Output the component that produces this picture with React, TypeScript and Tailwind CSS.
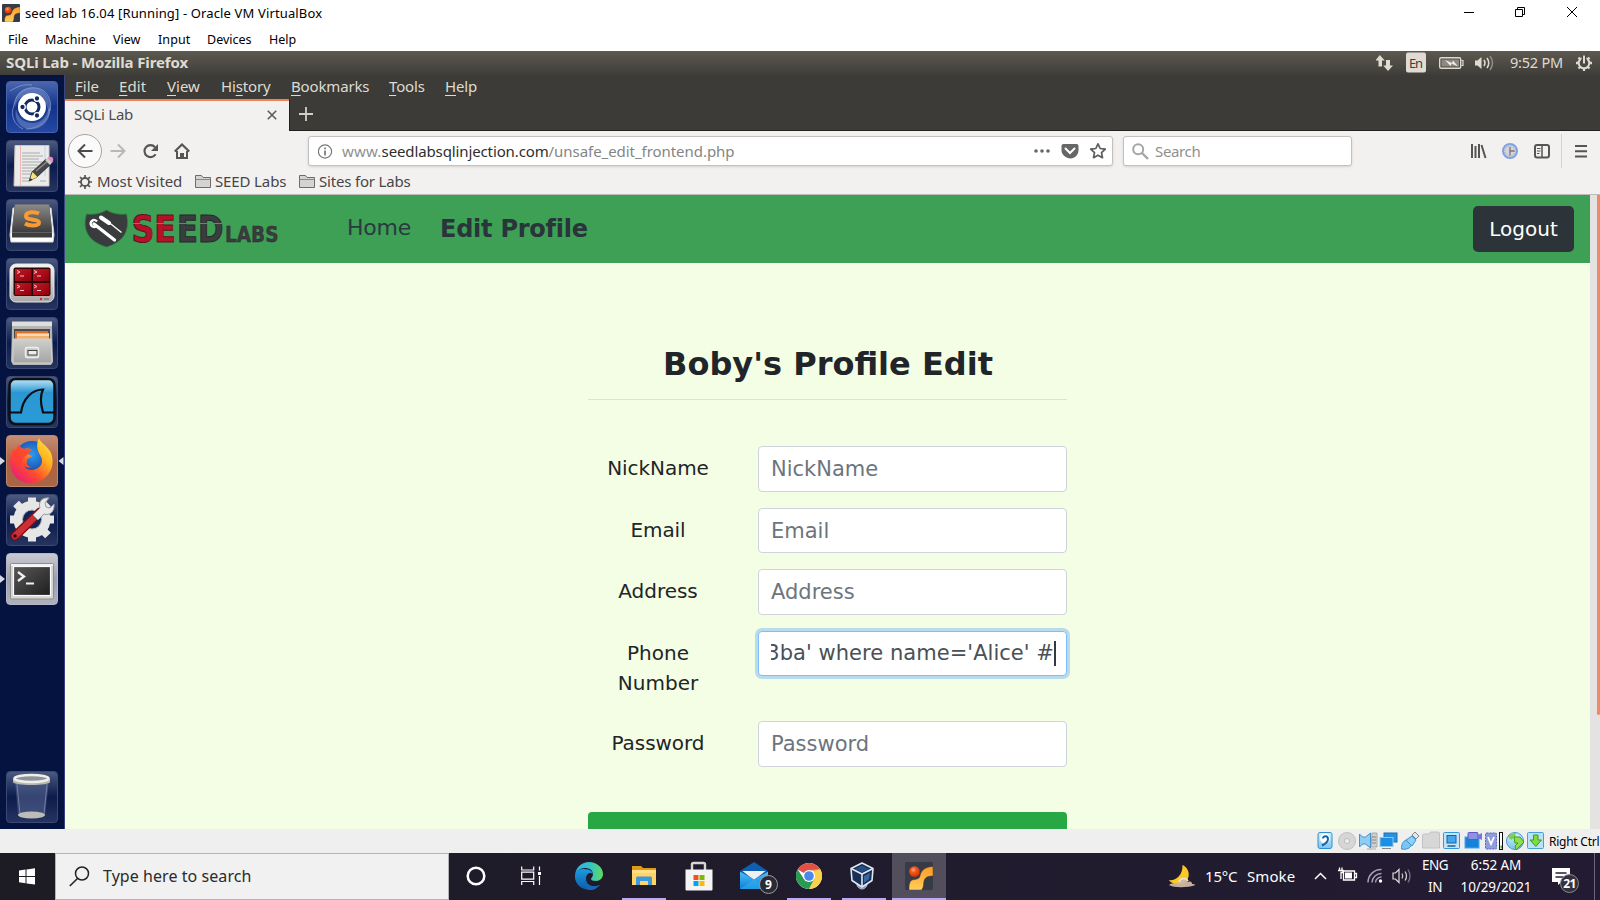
import type { ReactNode } from "react";

type SvgProps = { w: number; h: number; children: ReactNode; className?: string };

function Svg({ w, h, children, className = "" }: SvgProps) {
  return (
    <svg width={w} height={h} viewBox={`0 0 ${w} ${h}`} fill="none" className={`shrink-0 ${className}`}>
      {children}
    </svg>
  );
}

/* ---------- Shared gradients ---------- */

function Defs() {
  return (
    <svg width="0" height="0" className="absolute">
      <defs>
        <linearGradient id="amber" x1="0" y1="0" x2="0" y2="1">
          <stop offset="0" stopColor="#ff9a2a" />
          <stop offset="1" stopColor="#ffd05a" />
        </linearGradient>
        <radialGradient id="ball" cx=".4" cy=".35" r=".6">
          <stop offset="0" stopColor="#ffb08a" />
          <stop offset=".4" stopColor="#f9581e" />
          <stop offset="1" stopColor="#d63a08" />
        </radialGradient>
        <linearGradient id="silver" x1="0" y1="0" x2="0" y2="1">
          <stop offset="0" stopColor="#f4f4f2" />
          <stop offset="1" stopColor="#a9a9a6" />
        </linearGradient>
        <linearGradient id="drawer" x1="0" y1="0" x2="0" y2="1">
          <stop offset="0" stopColor="#cfcfce" />
          <stop offset="1" stopColor="#a4a4a3" />
        </linearGradient>
        <linearGradient id="darkKey" x1="0" y1="0" x2="0" y2="1">
          <stop offset="0" stopColor="#8a8a88" />
          <stop offset="1" stopColor="#3c3c3c" />
        </linearGradient>
        <linearGradient id="redPane" x1="0" y1="0" x2="1" y2="1">
          <stop offset="0" stopColor="#c41828" />
          <stop offset="1" stopColor="#8e000c" />
        </linearGradient>
        <linearGradient id="wire" x1="0" y1="0" x2="0" y2="1">
          <stop offset="0" stopColor="#bfe6f8" />
          <stop offset=".3" stopColor="#2b97d2" />
          <stop offset="1" stopColor="#2a9bd8" />
        </linearGradient>
        <linearGradient id="foxBody" x1="1" y1="0" x2="0.1" y2="1">
          <stop offset="0" stopColor="#fff44f" />
          <stop offset=".35" stopColor="#ffb11f" />
          <stop offset=".65" stopColor="#ff4a2e" />
          <stop offset="1" stopColor="#e31587" />
        </linearGradient>
        <radialGradient id="foxGlobe" cx=".5" cy=".4" r=".6">
          <stop offset="0" stopColor="#2a9bf0" />
          <stop offset="1" stopColor="#1c3fa0" />
        </radialGradient>
        <linearGradient id="term" x1="0" y1="0" x2="1" y2="1">
          <stop offset="0" stopColor="#595959" />
          <stop offset="1" stopColor="#1e1e1e" />
        </linearGradient>
        <linearGradient id="edgeTop" x1="0" y1=".4" x2="1" y2=".4">
          <stop offset="0" stopColor="#2bb3e8" />
          <stop offset=".55" stopColor="#35c3c8" />
          <stop offset="1" stopColor="#5fdc57" />
        </linearGradient>
        <linearGradient id="edgeBody" x1="0" y1="0" x2="0" y2="1">
          <stop offset="0" stopColor="#1b9de2" />
          <stop offset="1" stopColor="#0c59a4" />
        </linearGradient>
        <linearGradient id="sky" x1="0" y1="0" x2="0" y2="1">
          <stop offset="0" stopColor="#4cc0fa" />
          <stop offset="1" stopColor="#0d7fd6" />
        </linearGradient>
        <linearGradient id="pale" x1="0" y1="0" x2="0" y2="1">
          <stop offset="0" stopColor="#d5eefb" />
          <stop offset="1" stopColor="#7cc4ee" />
        </linearGradient>
      </defs>
    </svg>
  );
}

function VmLogo({ size }: { size: number }) {
  return (
    <svg width={size} height={size} viewBox="0 0 28 28" className="shrink-0">
      <rect width="28" height="28" rx="1.5" fill="#363c47" />
      <path d="M28 4.500v9.500c-5 0-8 1-9 5-.8 4 0 6-2.500 9H4c0-4 0-8 3-10 4-1 7-.5 8-4 1-6 6-9.500 13-9.500z" fill="url(#amber)" stroke="#5a3010" strokeWidth=".5" />
      <circle cx="9.500" cy="9.500" r="5.300" fill="url(#ball)" />
    </svg>
  );
}

/* ---------- Host window ---------- */

function TitleBar() {
  return (
    <div className="flex h-[26px] shrink-0 items-center bg-white">
      <div className="flex flex-1 items-center pl-0.5">
        <VmLogo size={18} />
        <span className="ml-[5px] whitespace-nowrap text-[13px] leading-none tracking-[0.14px] text-black">
          seed lab 16.04 [Running] - Oracle VM VirtualBox
        </span>
      </div>
      <Svg w={140} h={26}>
        <path d="M4 12.500h10" stroke="#000" />
        <path d="M55.500 9.500h7v7h-7zM57.500 9.500v-2h7v7h-2" stroke="#000" />
        <path d="M107 7l10 10M117 7l-10 10" stroke="#000" />
      </Svg>
    </div>
  );
}

function HostMenu() {
  return (
    <div className="flex h-[25px] shrink-0 items-center bg-white pt-[3px] pl-2 text-[12.500px] leading-none text-black">
      <span className="w-[37px]">File</span>
      <span className="w-[68px] tracking-[0.1px]">Machine</span>
      <span className="w-[45px]">View</span>
      <span className="w-[49px] tracking-[0.1px]">Input</span>
      <span className="w-[62px]">Devices</span>
      <span>Help</span>
    </div>
  );
}

/* ---------- Guest panel ---------- */

function GuestPanel() {
  return (
    <div className="flex h-6 shrink-0 items-center bg-linear-to-b from-[#5c5950] to-[#3f3e39] text-[#dfdbd2]">
      <span className="flex-1 pb-0.5 pl-1.5 text-[15px] leading-none font-bold tracking-[-0.12px]">SQLi Lab - Mozilla Firefox</span>
      <Svg w={130} h={24}>
        <path d="M3.800 4l5 5.500H6V15.500H2.500V9.500h-3z" fill="#dfdbd2" />
        <path d="M12 20l-4.800-5.500H10V9h4v5.500h3z" fill="#dfdbd2" />
        <rect x="30" y="1.500" width="20" height="20" rx="2" fill="#dfdbd2" />
        <rect x="63.700" y="6.700" width="21" height="10.600" rx="1.500" stroke="#dfdbd2" strokeWidth="1.400" />
        <rect x="65.500" y="8.500" width="17.500" height="7" fill="#8b8982" />
        <path d="M85.500 9.500h1.500v5h-1.500" stroke="#dfdbd2" strokeWidth="1.200" />
        <path d="M69 9l7 3 1-2.500 5 6-6.500-3-1 2.500z" fill="#efece6" />
        <path d="M99 9.500h2.500l4-3.500v12l-4-3.500H99z" fill="#dfdbd2" />
        <path d="M108 9q2 3 0 6" stroke="#dfdbd2" strokeWidth="1.500" />
        <path d="M111 7q3.500 5 0 10" stroke="#dfdbd2" strokeWidth="1.500" />
        <path d="M114 5q5 7 0 14" stroke="#8f8c85" strokeWidth="1.500" />
        <text x="33" y="16.500" fontSize="13" fill="#3f3e39" fontFamily="Noto Sans, sans-serif" textLength="14">En</text>
      </Svg>
      <span className="ml-1 w-[66px] pb-px text-[14.500px] leading-none tracking-[-0.2px] whitespace-nowrap">9:52 PM</span>
      <Svg w={24} h={24}>
        <g stroke="#dfdbd2">
          <circle cx="8" cy="12" r="5.300" strokeWidth="2" />
          <path d="M8 17v3M0 12h3M13 12h3M2.500 6.500l2 2M13.500 6.500l-2 2M2.500 17.500l2-2M13.500 17.500l-2-2" strokeWidth="2.300" />
        </g>
        <path d="M8 4v9" stroke="#4c4a44" strokeWidth="5" />
        <path d="M8 4.500v8" stroke="#dfdbd2" strokeWidth="2" />
      </Svg>
    </div>
  );
}

/* ---------- Launcher ---------- */

function Tile({ children, tone = "plain" }: { children: ReactNode; tone?: "plain" | "blue" | "orange" | "grey" }) {
  const tones = {
    plain: "bg-linear-to-b from-[#4d5a80] via-[#0b1b4c] to-[#26345f] border-[#3a4872]",
    blue: "bg-linear-to-b from-[#4a66ae] via-[#12328a] to-[#2549a4] border-[#4664ae]",
    orange: "bg-linear-to-b from-[#c58e74] via-[#ad6342] to-[#a96647] border-[#c28767]",
    grey: "bg-linear-to-b from-[#c9cad2] via-[#9c9fae] to-[#b0b2be] border-[#b5b7c4]",
  };
  return (
    <div className={`size-[52px] shrink-0 overflow-hidden rounded-[4px] border ${tones[tone]}`}>
      <svg width="52" height="52" viewBox="0 0 52 52" fill="none" className="-mt-px -ml-px">
        {children}
      </svg>
    </div>
  );
}

function Arrow({ flip = false }: { flip?: boolean }) {
  return (
    <Svg w={6} h={10}>
      <path d={flip ? "M5.500 1v8L0.500 5z" : "M0 1v8L5 5z"} fill="#d6d9e2" />
    </Svg>
  );
}

function LauncherRow({ children, left = false, right = false }: { children: ReactNode; left?: boolean; right?: boolean }) {
  return (
    <div className="flex items-center">
      <div className="w-1.5">{left && <Arrow />}</div>
      {children}
      <div className="w-1.5">{right && <Arrow flip />}</div>
    </div>
  );
}

function Launcher() {
  return (
    <div className="flex w-[65px] shrink-0 flex-col justify-between border-r border-[#3b4480] bg-[#051341] pt-1.5 pb-1.5">
      <div className="flex flex-col gap-[7px]">
        <LauncherRow>
          <Tile tone="blue">
            <path d="M9 27C6 11 22 2 34 8c9 5 13 15 8 28 1-10-3-18-12-22C21 12 10 16 9 27z" fill="#93a7da" opacity=".4" />
            <path d="M43 25c4 14-8 25-21 23C13 46 8 38 10 28c2 9 8 14 17 14 8 0 14-6 16-17z" fill="#93a7da" opacity=".4" />
            <path d="M8 24C10 8 28 3 38 10c5 4 8 12 6 20M44 28c-1 12-12 20-24 20M4 10c8-5 14-7 22-6M17 48C8 44 4 34 8 24" stroke="#8ea3d6" opacity=".7" />
            <circle cx="26" cy="26" r="14" fill="#fff" />
            <circle cx="26" cy="26" r="7" stroke="#122a63" strokeWidth="3" />
            <g fill="#122a63" stroke="#fff" strokeWidth="1.300">
              <circle cx="16.500" cy="26" r="2.800" />
              <circle cx="31" cy="17.500" r="2.800" />
              <circle cx="31" cy="34.500" r="2.800" />
            </g>
          </Tile>
        </LauncherRow>
        <LauncherRow>
          <Tile>
            <path d="M9 5.500h34V46H8z" fill="#ebebea" stroke="#c9c7bd" />
            <path d="M14.500 6v40" stroke="#f3b6b6" />
            <path d="M39 6v30" stroke="#b9d3ee" />
            <path d="M16 13h18M16 16h21M16 19h17M16 22h20M16 25h16M16 28h14M16 31h12M16 34h10M16 38h9M16 41h8M34 41h6" stroke="#aaa" />
            <path d="M23 41l3-9L40 19l5 5-14 13z" fill="#474747" stroke="#222" strokeWidth=".7" />
            <path d="M30 31l12-10" stroke="#8b8b8b" strokeWidth="1.500" />
            <path d="M23.500 40.500l3-8.500 5 5z" fill="#f3e27f" />
            <path d="M23.500 41l1-3 2 2z" fill="#222" />
            <path d="M39 20l3-2.500 5 4-3 3.500z" fill="#ccc" />
            <path d="M41.500 18l1.500-1c3-1 5 1 4 4l-1 1.500z" fill="#e78bc5" />
          </Tile>
        </LauncherRow>
        <LauncherRow>
          <Tile>
            <path d="M7 9h38l3 27-1 7H5l-1-7z" fill="#fff" stroke="#d8d8d8" />
            <path d="M9 5.500h34l3 25v8H6v-8z" fill="#3d3d3d" />
            <path d="M9 5.500h34l3 28H6z" fill="url(#darkKey)" stroke="#777" strokeWidth=".6" />
            <path d="M33 14.500c-4-2-13-2-13 2.500 0 5 13 2.500 13 6.500 0 4-10 3.500-14 1" stroke="#f99a33" strokeWidth="4" />
          </Tile>
        </LauncherRow>
        <LauncherRow>
          <Tile>
            <rect x="4" y="6" width="44" height="38" rx="6" fill="url(#silver)" stroke="#e8e8e4" />
            <rect x="7.500" y="9.500" width="37" height="28.500" rx="2" fill="#2b0508" />
            <g fill="url(#redPane)">
              <rect x="9" y="11" width="16.500" height="12" />
              <rect x="27" y="11" width="16.500" height="12" />
              <rect x="9" y="25" width="16.500" height="12" />
              <rect x="27" y="25" width="16.500" height="12" />
            </g>
            <path d="M11 12.500l3 1.500-3 1.500M14 18h4M28 12.500l3 1.500-3 1.500M31 18h4M11 27l3 1.500-3 1.500M14 32.500h4M28 27l3 1.500-3 1.500M31 32.500h4" stroke="#f0c2c2" />
            <circle cx="35" cy="41" r="1.200" fill="#e22" />
            <path d="M38 41h5" stroke="#8a8a86" strokeWidth="2" />
          </Tile>
        </LauncherRow>
        <LauncherRow>
          <Tile>
            <path d="M6 5h40v5l1 34-2 4H7l-2-4 1-34z" fill="#b5b5b4" />
            <path d="M6 4.500h40v4.500H6z" fill="#dededc" />
            <path d="M8 12h36v12H8z" fill="#4a4a4a" />
            <path d="M9 14h33v8H9z" fill="#d9702a" />
            <path d="M11 16h32v6H11z" fill="#f3b06a" />
            <path d="M11 18h32" stroke="#fff" />
            <path d="M7 22h38l1 24H7z" fill="url(#drawer)" stroke="#d2d2d0" />
            <rect x="19.500" y="30.500" width="13" height="10" rx="1.500" fill="#c8c8c6" stroke="#eee" strokeWidth="1.500" />
            <rect x="22" y="33.500" width="9" height="4.500" fill="#eee" stroke="#444" />
          </Tile>
        </LauncherRow>
        <LauncherRow>
          <Tile>
            <rect x="3.500" y="3" width="45" height="45" rx="6" fill="url(#wire)" stroke="#0b0f14" strokeWidth="2.500" />
            <path d="M4 36.500h11c2-14 11-23 22-23-3 6-2 16 0 23h11" stroke="#0b0f14" strokeWidth="2.200" />
          </Tile>
        </LauncherRow>
        <LauncherRow left right>
          <Tile tone="orange">
            <circle cx="26" cy="23" r="17" fill="url(#foxGlobe)" />
            <path d="M33 3c1 5 9 8 12 15 5 13-2 27-17 30C14 50 4 40 4 27c0-5 1-11 4-14l1 3 4-7c1 3 2 4 5 5 3-1 7 0 8 1-2 1-3 1-4 4l4 2c-1 2-5 2-5 4-1 4 0 6 4 7-4 1-6 0-7-1 3 6 13 5 17-1 2-4 1-7-1-10-3-5-4-11-1-17z" fill="url(#foxBody)" />
            <path d="M8 13l1 3 4-7c1 3 2 4 5 5 3-1 7 0 8 1-2 1-3 1-4 4-4 3-9 8-8 14-7-6-8-14-6-20z" fill="#fb3f35" opacity=".8" />
          </Tile>
        </LauncherRow>
        <LauncherRow>
          <Tile>
            <circle cx="26" cy="25.500" r="14" stroke="#e6e6e6" strokeWidth="9" />
            <g stroke="#e6e6e6" strokeWidth="8">
              <path d="M26 8V3.500M26 43v4.500M8.500 25.500H4M43.500 25.500H48M13.500 13L10 9.500M38.500 13L42 9.500M13.500 38L10 41.500M38.500 38l3.500 3.500" />
            </g>
            <circle cx="26" cy="25.500" r="9.500" stroke="#bdbdbd" fill="#10245c" />
            <path d="M9 42L34 18" stroke="#7d0c10" strokeWidth="9" strokeLinecap="round" />
            <path d="M9 42L33 19" stroke="#cc3036" strokeWidth="6.500" strokeLinecap="round" />
            <circle cx="9" cy="42" r="1.800" fill="#3d0507" />
            <path d="M27 21l7-7c-2-6 2-11 9-10l-4 5 1 4 4 1 4-4c1 8-5 12-10 10l-6 6z" fill="#e9e9e9" stroke="#9a9a9a" />
          </Tile>
        </LauncherRow>
        <LauncherRow left>
          <Tile tone="grey">
            <rect x="4.500" y="10.500" width="43" height="35.500" rx="1.500" fill="#d5d5d3" stroke="#8d8d8d" />
            <path d="M5 11h42v2H5z" fill="#f1f1ef" />
            <rect x="7.500" y="13.500" width="37" height="29" fill="url(#term)" stroke="#fafafa" strokeWidth="1.200" />
            <path d="M12 19l6 4.500-6 4.500" stroke="#f2f2f2" strokeWidth="2.300" />
            <path d="M20 30.500h8" stroke="#f2f2f2" strokeWidth="2" />
          </Tile>
        </LauncherRow>
      </div>
      <LauncherRow>
        <Tile>
          <path d="M9 9l3 35c6 4 21 4 27 0l4-35z" fill="#5a6891" opacity=".55" />
          <path d="M11 13l3 30M41 13l-3 30" stroke="#8792b3" opacity=".7" />
          <ellipse cx="25.500" cy="44" rx="13.500" ry="3.500" fill="#bdbdb8" />
          <path d="M7 8v3c0 4 37 4 37 0V8z" fill="#b9b9b3" />
          <ellipse cx="25.500" cy="7.500" rx="17" ry="3.500" fill="#8e929c" stroke="#efefea" strokeWidth="2.600" />
        </Tile>
      </LauncherRow>
    </div>
  );
}

/* ---------- Firefox chrome ---------- */

function MenuWord({ pre = "", hot, rest, className = "" }: { pre?: string; hot: string; rest: string; className?: string }) {
  return (
    <span className={`shrink-0 ${className}`}>
      {pre}
      <span className="underline decoration-1 underline-offset-[3px]">{hot}</span>
      {rest}
    </span>
  );
}

function FirefoxMenu() {
  return (
    <div className="flex h-[23px] shrink-0 items-center bg-[#3c3b37] pb-px pl-2.5 text-[15px] leading-none tracking-[-0.15px] text-[#dfdbd2]">
      <MenuWord hot="F" rest="ile" className="w-[44px] tracking-normal" />
      <MenuWord hot="E" rest="dit" className="w-[48px] tracking-[0.1px]" />
      <MenuWord hot="V" rest="iew" className="w-[54px] tracking-normal" />
      <MenuWord pre="Hi" hot="s" rest="tory" className="w-[70px]" />
      <MenuWord hot="B" rest="ookmarks" className="w-[98px]" />
      <MenuWord hot="T" rest="ools" className="w-[56px]" />
      <MenuWord hot="H" rest="elp" />
    </div>
  );
}

function TabStrip() {
  return (
    <div className="flex h-[33px] shrink-0 bg-[#3c3b37] pt-px">
      <div className="flex w-[224px] items-center border-t-2 border-[#f0815a] bg-[#f3f1f0] pr-[12px] pb-[3px] pl-[9px]">
        <span className="flex-1 text-[15px] leading-none tracking-[-0.26px] text-[#4c4c4c]">SQLi Lab</span>
        <Svg w={10} h={10}>
          <path d="M.8.8l8.400 8.400M9.200.8L.8 9.200" stroke="#5b5b5b" strokeWidth="1.600" />
        </Svg>
      </div>
      <div className="flex flex-1 items-center border-b border-l border-[#232220] pb-0.5 pl-[9px]">
        <Svg w={14} h={14}>
          <path d="M7 0v14M0 7h14" stroke="#d3d0c9" strokeWidth="1.800" />
        </Svg>
      </div>
    </div>
  );
}

function NavToolbar() {
  return (
    <div className="flex h-10 shrink-0 items-center bg-[#f3f1f0] pl-[3px]">
      <div className="flex size-[34px] shrink-0 items-center justify-center rounded-full border border-[#a6a4a2] bg-[#fbfafa]">
        <Svg w={16} h={16}>
          <path d="M15.500 8H2M8 1.500L1.500 8 8 14.500" stroke="#4b4b4b" strokeWidth="2" />
        </Svg>
      </div>
      <Svg w={16} h={16} className="ml-2">
        <path d="M.5 8H14M8 1.500L14.500 8 8 14.500" stroke="#b9b8b7" strokeWidth="2" />
      </Svg>
      <Svg w={16} h={16} className="ml-4">
        <path d="M13.600 11.300A6 6 0 1 1 13 4.200" stroke="#555" strokeWidth="2.100" />
        <path d="M16 1v7H9z" fill="#555" />
      </Svg>
      <Svg w={16} h={16} className="ml-4">
        <path d="M.7 8.500L8 1.500l7.300 7" stroke="#555" strokeWidth="2.200" />
        <path d="M3 8v7h10V8" stroke="#555" strokeWidth="2" />
        <path d="M6 15v-5h4v5z" fill="#555" />
      </Svg>
      <div className="ml-[118px] flex h-[30px] w-[805px] shrink-0 items-center rounded-[3px] border border-[#c3c1bf] bg-white pl-[9px] text-[15px] leading-none shadow-sm">
        <Svg w={15} h={15}>
          <circle cx="7" cy="7.500" r="6.600" stroke="#777" strokeWidth="1.200" />
          <path d="M7 6.500v5M7 3.500v1.800" stroke="#777" strokeWidth="1.700" />
        </Svg>
        <span className="ml-[9px] flex-1 whitespace-nowrap text-[#8f8f8f]">
          <span className="tracking-[0.2px]">www.</span>
          <span className="tracking-[-0.12px] text-[#2e2e2e]">seedlabsqlinjection.com</span>
          <span className="tracking-[-0.05px] text-[#858585]">/unsafe_edit_frontend.php</span>
        </span>
        <Svg w={80} h={18}>
          <g fill="#666">
            <circle cx="4" cy="9" r="1.800" />
            <circle cx="10" cy="9" r="1.800" />
            <circle cx="16" cy="9" r="1.800" />
          </g>
          <path d="M31.500 2h13q2 0 2 2v4.500c0 4-3.500 8-8 8s-9-4-9-8V4q0-2 2-2z" fill="#666" />
          <path d="M33.500 6.500L38 11l4.500-4.500" stroke="#fff" strokeWidth="2" strokeLinecap="round" />
          <path d="M66 1.800l2.200 4.700 5.100.6-3.800 3.500 1 5.100-4.500-2.500-4.500 2.500 1-5.100-3.800-3.500 5.100-.6z" stroke="#5c5c5c" strokeWidth="1.700" strokeLinejoin="round" />
        </Svg>
      </div>
      <div className="ml-2.5 flex h-[30px] w-[229px] shrink-0 items-center rounded-[3px] border border-[#c3c1bf] bg-white pl-2 text-[15px] leading-none tracking-[-0.35px] text-[#8f8f8f] shadow-sm">
        <Svg w={17} h={17}>
          <circle cx="6.200" cy="6.200" r="5" stroke="#a5a5a5" strokeWidth="2" />
          <path d="M10 10l6 6" stroke="#a5a5a5" strokeWidth="2.400" />
        </Svg>
        <span className="ml-1.5">Search</span>
      </div>
      <Svg w={130} h={40} className="ml-[118px]">
        <path d="M2 13v14M5.500 15v12M9 13v14M11.500 14l4 13" stroke="#555" strokeWidth="2" />
        <circle cx="40" cy="20" r="7" fill="#d3d6dc" stroke="#7fa2e2" strokeWidth="2" />
        <circle cx="40" cy="20" r="5" stroke="#9a9da3" strokeDasharray="1 1.600" />
        <path d="M40 16v8.500M40 20h4.500" stroke="#777" strokeWidth="1.300" />
        <path d="M40 19.500v2" stroke="#d16b6b" />
        <rect x="65" y="14" width="14" height="12.500" rx="2" stroke="#555" strokeWidth="2" />
        <path d="M72 14v12" stroke="#555" strokeWidth="1.500" />
        <path d="M67 17.500h3.500M67 20h3.500M67 22.500h2.500" stroke="#555" />
        <path d="M91.500 3v34" stroke="#d4d2d0" />
        <path d="M105 15h12M105 20.200h12M105 25.400h12" stroke="#555" strokeWidth="2" />
      </Svg>
    </div>
  );
}

function Folder() {
  return (
    <Svg w={16} h={15}>
      <path d="M.5 13.500v-12h6l1.500 2h7.500v10z" fill="#d4d3d1" stroke="#6c6c6c" />
      <path d="M.5 5.500h15" stroke="#8a8a8a" />
    </Svg>
  );
}

function BookmarksBar() {
  return (
    <div className="flex h-6 shrink-0 items-center border-b border-[#bdbbb9] bg-[#f3f1f0] pb-0.5 pl-[13px] text-[15px] leading-none whitespace-nowrap text-[#464646]">
      <Svg w={14} h={14}>
        <circle cx="7" cy="7" r="4" stroke="#555" strokeWidth="1.800" />
        <path d="M7 0v3M7 11v3M0 7h3M11 7h3M2 2l2.200 2.200M9.800 9.800L12 12M12 2L9.800 4.200M4.200 9.800L2 12" stroke="#555" strokeWidth="1.700" />
      </Svg>
      <span className="ml-[5px] w-[98px] tracking-[-0.08px]">Most Visited</span>
      <Folder />
      <span className="ml-1 w-[84px] tracking-[-0.13px]">SEED Labs</span>
      <Folder />
      <span className="ml-1 tracking-[-0.18px]">Sites for Labs</span>
    </div>
  );
}

/* ---------- Web page ---------- */

function SeedLogo() {
  return (
    <Svg w={200} h={44}>
      <path d="M22.500 3c6 4 14 5 20 4 3 14 0 27-20 33C2.500 34-1.500 21 2.500 7c6 1 14 0 20-4z" fill="#393b3d" stroke="#2f7f45" strokeWidth=".8" />
      <path d="M10 17l20.500 16" stroke="#fff" strokeWidth="3.400" strokeLinecap="round" />
      <path d="M13 14.500a3.500 3.500 0 1 0-1 5" stroke="#fff" strokeWidth="2.400" />
      <path d="M17 10.500l8 5.500" stroke="#fff" strokeWidth="4" strokeLinecap="round" />
      <path d="M25 15.500l12.500 10" stroke="#fff" strokeWidth="1.400" />
      <g fontFamily="DejaVu Sans, sans-serif" fontWeight="700" strokeLinejoin="round">
        <text x="47.500" y="35" fontSize="37.500" textLength="44.500" lengthAdjust="spacingAndGlyphs" fill="#b5122a" stroke="#5e1220" strokeWidth="1">SE</text>
        <text x="93" y="35" fontSize="37.500" textLength="46.500" lengthAdjust="spacingAndGlyphs" fill="#3a3c3e" stroke="#26292a" strokeWidth="1">ED</text>
        <text x="141" y="35" fontSize="22" textLength="53.500" lengthAdjust="spacingAndGlyphs" fill="#3a3c3e" stroke="#26292a" strokeWidth=".4">LABS</text>
      </g>
      <path d="M48 16.500h90" stroke="#3ea055" strokeWidth="1.200" />
    </Svg>
  );
}

function Field({ label, className = "" }: { label: string; className?: string }) {
  return (
    <div className={`flex shrink-0 items-start ${className}`}>
      <span className="w-[140px] shrink-0 pt-[7px] text-center text-[20px] leading-[30px] tracking-[-0.05px] text-[#212529]">{label}</span>
      <div className="ml-[30px] flex h-[45.500px] flex-1 items-center rounded-[4px] border border-[#ced4da] bg-white pt-[1.500px] pl-3 text-[21px] leading-none text-[#6c757d]">
        {label}
      </div>
    </div>
  );
}

function WebPage() {
  return (
    <div className="flex min-h-0 flex-1 font-['DejaVu_Sans',sans-serif]">
      <div className="flex min-w-0 flex-1 flex-col overflow-hidden bg-[#f4fee4]">
        <div className="flex h-[68px] shrink-0 items-center bg-[#3ea055] pr-4 pl-[19px]">
          <SeedLogo />
          <span className="ml-[63px] w-[93px] pb-0.5 text-[22px] leading-none tracking-[-0.2px] text-[#2b3a3f]">Home</span>
          <span className="flex-1 pb-px text-[24px] leading-none font-bold tracking-[-0.24px] text-[#29343b]">Edit Profile</span>
          <div className="flex h-[46px] w-[101px] items-center justify-center rounded-[5px] bg-[#2c3439] text-[20px] leading-none text-white">
            Logout
          </div>
        </div>
        <div className="ml-[523px] flex w-[479px] flex-1 flex-col">
          <h1 className="flex h-[137px] shrink-0 items-end justify-center border-b border-[#dbe5cd] pb-[18px] pl-px text-[32px] leading-[34px] font-bold whitespace-nowrap text-[#212529]">
            Boby's Profile Edit
          </h1>
          <Field label="NickName" className="mt-[46px] h-[61.500px]" />
          <Field label="Email" className="h-[61.500px]" />
          <Field label="Address" className="h-[61.500px]" />
          <div className="flex h-[90.500px] shrink-0 items-start">
            <span className="w-[140px] shrink-0 px-6 pt-[7px] text-center text-[20px] leading-[30px] text-[#212529]">Phone Number</span>
            <div className="ml-[30px] flex h-[45.500px] w-[309px] items-center rounded-[4px] border border-[#80bdff] bg-white pt-px pr-[10px] pl-3 shadow-[0_0_0_3px_#b9dcec]">
              <div className="flex h-full flex-1 items-center justify-end overflow-hidden">
                <span className="shrink-0 text-[21px] leading-none tracking-[0.04px] whitespace-nowrap text-[#495057]">3ba' where name='Alice' #</span>
                <span className="h-[25px] w-[2px] shrink-0 bg-[#343a40]" />
              </div>
            </div>
          </div>
          <Field label="Password" className="h-[91px]" />
          <div className="h-[46px] shrink-0 rounded-[4px] bg-[#28a745]" />
        </div>
      </div>
      <div className="flex w-2.5 shrink-0 justify-end bg-[#e4e3e2]">
        <div className="h-[520px] w-[3px] rounded-b-sm bg-[#ee8a68]" />
      </div>
    </div>
  );
}

/* ---------- VirtualBox status bar ---------- */

function StatusBar() {
  return (
    <div className="flex h-6 shrink-0 items-center justify-end bg-[#efefef]">
      <Svg w={235} h={24}>
        <rect x="4" y="3.500" width="14" height="16" rx="2" fill="url(#pale)" stroke="#2e8fd0" />
        <circle cx="11" cy="9.500" r="5" fill="#fff" />
        <path d="M9 9.500c0-3 5-3 5 .5 0 3-3 5-6 6.500" stroke="#1565a8" strokeWidth="2" />
        <circle cx="33" cy="12" r="8.500" fill="#d6d6d6" stroke="#c0c0c0" />
        <circle cx="33" cy="12" r="2.500" fill="#efefef" stroke="#bbb" />
        <path d="M58 4h5v14h-6zM53 20h9" fill="#cfcfcf" stroke="#aaa" />
        <path d="M58 8h4M58 11h4M58 14h4" stroke="#888" />
        <path d="M45.500 5l3 3h3l5-4v15l-5-4h-3l-3 3z" fill="#8fcdf2" stroke="#4a90c4" />
        <rect x="70" y="4" width="13" height="9" fill="#2693e2" stroke="#1f6eae" />
        <rect x="66" y="8.500" width="13" height="9" fill="#1d8ee4" stroke="#8ec9ee" />
        <path d="M68 19.500h9" stroke="#888" />
        <path d="M87.500 20c0-4 1-8 5-9l5 5c-1 3-5 5-10 4z" fill="#7ac6f2" stroke="#3d93cc" />
        <path d="M92 11l6-4 4 4-4 6z" fill="#8fd0f4" stroke="#3d93cc" />
        <path d="M98 6l3-3 4 4-3 3z" fill="#e6e6e6" stroke="#888" />
        <path d="M108.500 8V6l1-1h6l1-2h8l1 1v15h-17z" fill="#d7d7d7" stroke="#c2c2c2" />
        <rect x="129.500" y="3.500" width="16" height="16" rx="1" fill="#c4e5f8" stroke="#3497dc" />
        <rect x="133" y="6.500" width="9" height="7.500" fill="#42a6ee" stroke="#1c5f9c" />
        <path d="M133.500 17h8" stroke="#1c5f9c" strokeWidth="1.500" />
        <rect x="151" y="8" width="14" height="11" fill="#1583da" stroke="#4fa6e8" />
        <rect x="154" y="3.500" width="10" height="7" rx="1" fill="#9090e4" stroke="#5c5cc0" />
        <path d="M164 6l4-2v7l-4-2z" fill="#7676d6" />
        <rect x="171.500" y="4" width="11" height="16" rx="1" fill="#8e9bdc" stroke="#5a66b4" strokeDasharray="2 1" />
        <path d="M174 8l3 7 3-7" stroke="#fff" strokeWidth="1.700" />
        <rect x="185.500" y="3.500" width="3" height="17" fill="#fff" stroke="#111" />
        <path d="M186.500 18h1.500" stroke="#35d02c" strokeWidth="3" />
        <circle cx="201" cy="12" r="8.500" fill="url(#pale)" stroke="#4696ce" />
        <path d="M194 8c2-3 5-4 8-4l-1 4-4 3z" fill="#7ccf51" />
        <path d="M200 8h6l4 5-8 8-1-4 3-3h-3z" fill="#8fe04a" stroke="#43992a" />
        <rect x="213.500" y="3.500" width="16" height="16" rx="1" fill="#b9e1f7" stroke="#4a9fd6" />
        <path d="M219.500 6h4.500v5h3.500l-5.700 6.500L216 11h3.500z" fill="#7ddb3c" stroke="#429a2a" />
      </Svg>
      <span className="w-[51px] pt-0.5 text-[12px] leading-none tracking-[-0.25px] whitespace-nowrap text-black">Right Ctrl</span>
    </div>
  );
}

/* ---------- Windows taskbar ---------- */

function TaskButton({ children, open = false, active = false }: { children: ReactNode; open?: boolean; active?: boolean }) {
  return (
    <div className={`mr-px flex w-[54px] shrink-0 flex-col items-center ${active ? "bg-[#524e5b]" : ""}`}>
      <div className="flex h-[45px] items-center">{children}</div>
      {(open || active) && <div className={`h-0.5 bg-[#bba9f7] ${active ? "w-full" : "w-11"}`} />}
    </div>
  );
}

function Taskbar() {
  return (
    <div className="flex h-[47px] shrink-0 bg-linear-to-r from-[#1d1c25] to-[#231b33] text-white">
      <div className="flex w-[55px] shrink-0 items-center justify-center pr-px pb-px">
        <Svg w={16} h={17}>
          <path d="M0 2.500l6.500-.9v6.300H0zM7.500 1.400L16 .2v7.700H7.500zM0 8.900h6.500v6.300L0 14.300zM7.500 8.900H16v7.700l-8.500-1.200z" fill="#fff" />
        </Svg>
      </div>
      <div className="flex w-[394px] shrink-0 items-center border border-[#b4b4b4] bg-[#f1f1f1] pb-px pl-[13px] text-[#2b2b2b]">
        <Svg w={21} h={21}>
          <circle cx="13" cy="7.500" r="6.500" stroke="#222" strokeWidth="1.500" />
          <path d="M8.500 12.500L.8 20" stroke="#222" strokeWidth="1.600" />
        </Svg>
        <span className="ml-[13px] text-[16px] leading-none tracking-[0.06px] whitespace-nowrap">Type here to search</span>
      </div>
      <TaskButton>
        <Svg w={20} h={20}>
          <circle cx="10" cy="10" r="8.300" stroke="#fff" strokeWidth="2.500" />
        </Svg>
      </TaskButton>
      <TaskButton>
        <Svg w={20} h={20}>
          <path d="M.7.500v3.500h12V.500M.7 19v-3.500h12V19M.7 6.200h12v7H.7zM18.500.500v4M18.500 10v9" stroke="#fff" strokeWidth="1.200" />
          <path d="M17 6h3v3h-3z" fill="#fff" />
        </Svg>
      </TaskButton>
      <div className="w-[3px]" />
      <TaskButton>
        <Svg w={28} h={28}>
          <path d="M0 13C1 5 7 0 14 0c8 0 14 6 14 12 0 4-3 7-7 7-3 0-5-1-5-2 0-1 2-2 2-5 0-4-4-6-8-6-5 0-9 3-10 7z" fill="url(#edgeTop)" />
          <path d="M0 13c1-5 5-6 9-6 6 0 9 3 9 5-2-2-7-1-7 5 0 6 6 9 14 6-3 3-6 5-11 5C5 28-1 20 0 13z" fill="url(#edgeBody)" />
          <path d="M11 17c0 6 6 9 14 6-3 3-6 5-9 5-7-1-8-7-5-11z" fill="#1768b4" />
        </Svg>
      </TaskButton>
      <TaskButton open>
        <Svg w={26} h={22}>
          <path d="M1 1h9l2 2h13v4H1z" fill="#e09b12" />
          <path d="M1 5h24v15H1z" fill="#ffd364" />
          <path d="M1 5h24v3H1z" fill="#ffdf86" />
          <path d="M5 20v-7q0-1.500 1.500-1.500h13Q21 11.500 21 13v7h-4v-4H9v4z" fill="#3d97dc" />
        </Svg>
      </TaskButton>
      <TaskButton>
        <Svg w={28} h={30}>
          <path d="M7 9V3.500Q7 2 8.500 2h10Q20 2 20 3.500V9" stroke="#d6d6d6" strokeWidth="2.400" />
          <path d="M.5 8.500h27v20q0 1-1 1h-25q-1 0-1-1z" fill="#f4f4f4" />
          <path d="M8.500 14h5v5h-5z" fill="#f25022" />
          <path d="M14.500 14h5v5h-5z" fill="#7fba00" />
          <path d="M8.500 20h5v5h-5z" fill="#00a4ef" />
          <path d="M14.500 20h5v5h-5z" fill="#ffb900" />
        </Svg>
      </TaskButton>
      <TaskButton>
        <div className="relative">
          <Svg w={28} h={27}>
            <path d="M0 9L14 0l14 9-14 10z" fill="#0f5fae" />
            <path d="M0 9.500l14 8 14-8V27H0z" fill="url(#sky)" />
            <path d="M2.500 9h23l-7 5.500-4.500 3-4.500-3z" fill="#f0f0f0" />
            <path d="M0 27l14-9.500L28 27z" fill="#31adf0" opacity=".6" />
          </Svg>
          <div className="absolute top-[13px] left-[19px] flex size-[19px] items-center justify-center rounded-full border border-[#9a9aa2] bg-[#2b2b36] text-[12px] leading-none font-bold">
            9
          </div>
        </div>
      </TaskButton>
      <TaskButton open>
        <Svg w={26} h={26}>
          <circle cx="13" cy="13" r="13" fill="#fff" />
          <path d="M13 13L1.740 6.500A13 13 0 0 1 24.260 6.500L13 7z" fill="#df5146" />
          <path d="M24.260 6.500A13 13 0 0 1 13 26l5.200-10L17 7z" fill="#fbd04b" />
          <path d="M1.740 6.500A13 13 0 0 0 13 26l5.200-10H8z" fill="#2a9a52" />
          <path d="M1.740 6.500h22.520L13 8z" fill="#df5146" />
          <circle cx="13" cy="13" r="6" fill="#fff" />
          <circle cx="13" cy="13" r="4.800" fill="#4a88ee" />
        </Svg>
      </TaskButton>
      <TaskButton open>
        <Svg w={26} h={28} className="mr-1">
          <path d="M8 20c-1 4 2 7 5 7s6-3 5-7" fill="#7e92b8" stroke="#c6d0e2" strokeWidth=".8" />
          <path d="M13 1l11 5.500-1 12L13 25 3 18.500 2 6.500z" fill="#183056" stroke="#dfe7f2" strokeWidth="1.600" strokeLinejoin="round" />
          <path d="M2.500 6.800L13 12l10.500-5.200M13 12v13" stroke="#dfe7f2" strokeWidth="1.600" />
          <path d="M13 3.500L20 7l-7 3.300L6 7z" fill="#284d80" />
          <path d="M15 14l6-3-1 6-5 4z" fill="#3b66a0" />
        </Svg>
      </TaskButton>
      <TaskButton active>
        <VmLogo size={28} />
      </TaskButton>
      <div className="flex-1" />
      <div className="flex items-center">
        <Svg w={27} h={24}>
          <path d="M13.500 0c9 4 8 17-1 19-5 1-11-1-12.500-4 6 1 14-4 13.500-15z" fill="#fbc926" />
          <path d="M0 20c2-2 6-2 9-2 2-5 8-5 10-1 3-1 4 0 4 2 3 0 4 1 2 1.500-6 2-20 2.500-25-.5z" fill="#cfb8a4" opacity=".95" />
          <path d="M10 17c1-4 7-5 9-1" stroke="#f1e6da" strokeWidth="1.500" />
        </Svg>
        <span className="ml-[9px] w-[42px] text-[15px] leading-none tracking-[-0.2px]">15°C</span>
        <span className="w-[67px] text-[15px] leading-none tracking-[0.08px]">Smoke</span>
        <Svg w={106} h={47}>
          <path d="M1 26l5.500-5.500L12 26" stroke="#fff" strokeWidth="1.500" />
          <path d="M29.500 18h11v9h-11zM41 20.500h1.500v4H41" stroke="#fff" strokeWidth="1.300" />
          <path d="M31 19.500h7v6h-7z" fill="#fff" />
          <path d="M25.500 14.500V18M28 14.500V18M24 17.500h5v2h-2V26" stroke="#fff" strokeWidth="1.300" />
          <path d="M54 29.500A13 13 0 0 1 67.500 16.500M58 29.500a9.500 9.500 0 0 1 9.500-9M61.500 29.500a6 6 0 0 1 6-5.500" stroke="#a9a5b4" strokeWidth="1.400" />
          <circle cx="66.500" cy="28" r="1.700" fill="#fff" />
          <path d="M79 20h2.500L85 16.500v13L81.500 26H79z" stroke="#ddd" strokeWidth="1.200" />
          <path d="M88 20.500q1.500 2.500 0 5M91 18.500q3 4.500 0 9" stroke="#ccc" strokeWidth="1.300" />
          <path d="M94 16.500q4 6.500 0 13" stroke="#77728a" strokeWidth="1.300" />
        </Svg>
        <div className="flex w-[30px] flex-col items-center pb-px text-[13.500px] leading-[22px] tracking-[-0.5px]">
          <span>ENG</span>
          <span>IN</span>
        </div>
        <div className="flex w-[92px] flex-col items-center pb-px text-[13.500px] leading-[22px] tracking-[-0.1px]">
          <span>6:52 AM</span>
          <span>10/29/2021</span>
        </div>
        <div className="relative flex w-[51px] items-center pl-[10px]">
          <Svg w={18} h={17}>
            <path d="M0 0h18v14h-8.500L6 17v-3H0z" fill="#fff" />
            <path d="M3.500 5h11M3.500 9h8" stroke="#241c34" strokeWidth="1.300" />
          </Svg>
          <div className="absolute top-[6px] left-[18px] flex size-[19px] items-center justify-center rounded-full border border-[#8a8794] bg-[#35323f] text-[12px] leading-none font-bold tracking-[-0.5px]">
            21
          </div>
        </div>
        <div className="mr-[5px] ml-px h-[47px] w-px bg-[#6b6679]" />
      </div>
    </div>
  );
}

export default function App() {
  return (
    <div className="flex h-[900px] w-[1600px] flex-col overflow-hidden font-['Noto_Sans',sans-serif]">
      <Defs />
      <TitleBar />
      <HostMenu />
      <GuestPanel />
      <div className="flex min-h-0 flex-1">
        <Launcher />
        <div className="flex min-w-0 flex-1 flex-col">
          <FirefoxMenu />
          <TabStrip />
          <NavToolbar />
          <BookmarksBar />
          <WebPage />
        </div>
      </div>
      <StatusBar />
      <Taskbar />
    </div>
  );
}
